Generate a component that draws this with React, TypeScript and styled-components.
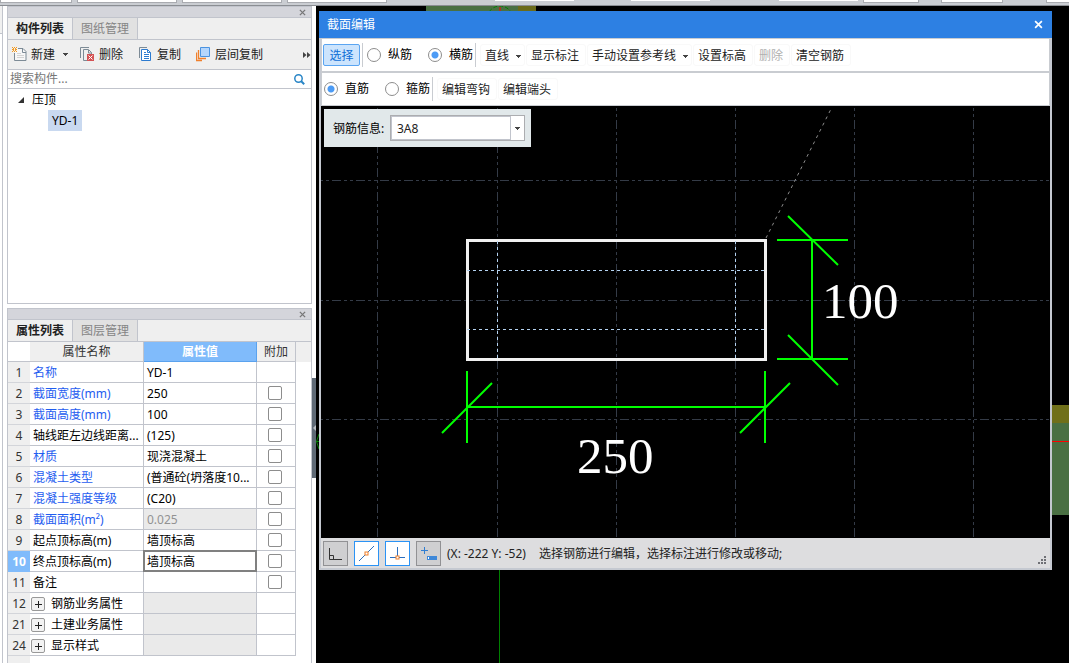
import React from 'react';
import styled, { createGlobalStyle, css } from 'styled-components';

const line = '#c1c4cc';
const fontStack = '"Noto Sans", "Noto Sans CJK SC", sans-serif';

const GlobalStyle = createGlobalStyle`
  *, *::before, *::after { box-sizing: border-box; }
  html, body { margin: 0; padding: 0; background: #fff; }
  body, button, input, select, textarea { font-family: ${fontStack}; font-size: 12px; line-height: 18px; }
  button { margin: 0; padding: 0; border: 0; background: none; color: inherit; }
  svg { display: block; flex: none; }
`;

/* ---------- page frame ---------- */

const Page = styled.div`
  display: flex;
  flex-direction: column;
  min-height: 100vh;
  overflow: hidden;
  color: #000;
`;

const TopStrip = styled.div`
  display: flex;
  align-items: flex-start;
  height: 6px;
  overflow: hidden;
  background: #cacdd2;
  border-bottom: 1px solid #8b8e93;
`;

const StripField = styled.div<{ $w: number; $gap: number; $outlined?: boolean }>`
  flex: none;
  width: ${p => p.$w}px;
  margin-left: ${p => p.$gap}px;
  height: ${p => (p.$outlined ? 3 : 1)}px;
  background: #fff;
  ${p => p.$outlined && css`border: 1px solid #a9abb0; border-top: 0;`}
`;

const Body = styled.div`
  display: flex;
  flex: 1;
`;

const LeftEdge = styled.div`
  flex: none;
  width: 3px;
  margin-right: 4px;
  border-right: 1px solid ${line};
`;

const LeftEdgeTab = styled.div`
  height: 28px;
  background: #f0f0f0;
  border-bottom: 1px solid ${line};
`;

const Sidebar = styled.div`
  flex: none;
  display: flex;
  flex-direction: column;
  gap: 4px;
  width: 305px;
`;

const Splitter = styled.div`
  flex: none;
  width: 4px;
  padding-top: 372px;
`;

const SplitterHandle = styled.button`
  display: flex;
  align-items: center;
  width: 4px;
  height: 100px;
  background: #5f6a76;
`;

/* ---------- docked panels ---------- */

const Panel = styled.section<{ $fill?: boolean }>`
  display: flex;
  flex-direction: column;
  border: 1px solid ${line};
  background: #fff;
  ${p => (p.$fill ? css`flex: 1; border-bottom: 0;` : css`height: 298px;`)}
`;

const PanelBar = styled.div`
  display: flex;
  justify-content: flex-end;
  align-items: center;
  height: 11px;
  padding-right: 5px;
  background: #d4d5db;
  border-bottom: 1px solid ${line};
`;

const Tabs = styled.div`
  display: flex;
  height: 22px;
  background: #efefef;
  border-bottom: 1px solid ${line};
`;

const Tab = styled.button<{ $active?: boolean }>`
  width: 65px;
  border-right: 1px solid ${line};
  background: ${p => (p.$active ? '#efefef' : '#e1e1e1')};
  color: ${p => (p.$active ? '#222' : '#858585')};
  font-weight: ${p => (p.$active ? 700 : 400)};
`;

const PanelTools = styled.div`
  display: flex;
  align-items: center;
  height: 30px;
  padding-left: 4px;
  background: #efefef;
  border-bottom: 1px solid ${line};
`;

const ToolButton = styled.button<{ $after: number }>`
  display: flex;
  align-items: center;
  gap: 4px;
  margin-right: ${p => p.$after}px;
  color: #222;
  white-space: nowrap;
`;

const CaretGap = styled.span`
  padding-left: 4px;
`;

const MoreButton = styled.button`
  margin-left: auto;
`;

const SearchRow = styled.div`
  display: flex;
  align-items: center;
  height: 19px;
  padding: 0 6px 0 2px;
  border-bottom: 1px solid ${line};
`;

const SearchInput = styled.input`
  flex: 1;
  min-width: 0;
  height: 18px;
  padding: 0;
  border: 0;
  outline: 0;
  background: none;
  &::placeholder { color: #777; opacity: 1; }
`;

const Tree = styled.ul`
  margin: 0;
  padding: 0 0 0 10px;
  list-style: none;
`;

const TreeNode = styled.div`
  display: flex;
  align-items: center;
  gap: 8px;
  height: 21px;
`;

const TreeChildren = styled.ul`
  margin: 0;
  padding: 0 0 0 30px;
  list-style: none;
`;

const TreeLeaf = styled.button`
  display: block;
  height: 21px;
  padding: 0 4px;
  background: #c9d9f0;
`;

/* ---------- property table ---------- */

const GridArea = styled.div`
  flex: 1;
  background: linear-gradient(to right, #efefef 22px, #fff 22px);
`;

const GridTop = styled.div`
  background: linear-gradient(#efefef 20px, transparent 20px);
`;

const PropTable = styled.table`
  table-layout: fixed;
  width: 288px;
  border-collapse: separate;
  border-spacing: 0;
`;

const HeadCell = styled.th<{ $active?: boolean; $corner?: boolean }>`
  height: 20px;
  padding: 1px 0 0;
  line-height: 18px;
  font-weight: ${p => (p.$active ? 700 : 400)};
  color: ${p => (p.$active ? '#fff' : '#333')};
  background: ${p => (p.$active ? '#80bbfb' : p.$corner ? '#fff' : '#efefef')};
  border-right: ${p => (p.$corner ? '0' : '1px')} solid ${p => (p.$active ? '#5aa2ee' : line)};
  border-bottom: 1px solid ${p => (p.$active ? '#5aa2ee' : line)};
`;

const RowNumber = styled.th<{ $active?: boolean }>`
  height: 21px;
  padding: 2px 0 0;
  line-height: 18px;
  text-align: center;
  font-weight: ${p => (p.$active ? 700 : 400)};
  color: ${p => (p.$active ? '#fff' : '#333')};
  background: ${p => (p.$active ? '#80bbfb' : '#efefef')};
  border-bottom: 1px solid ${p => (p.$active ? '#80bbfb' : '#d3d5da')};
`;

const Cell = styled.td<{ $tone?: 'link' | 'muted'; $shaded?: boolean; $focus?: boolean; $check?: boolean }>`
  position: relative;
  height: 21px;
  padding: ${p => (p.$check ? '0 2px 0 0' : '2px 3px 0')};
  line-height: 18px;
  overflow: ${p => (p.$focus ? 'visible' : 'hidden')};
  text-overflow: ellipsis;
  white-space: nowrap;
  color: ${p => (p.$tone === 'link' ? '#1f5df0' : p.$tone === 'muted' ? '#929292' : '#000')};
  background: ${p => (p.$shaded ? '#eaeaea' : '#fff')};
  border-right: 1px solid ${line};
  border-bottom: 1px solid ${line};
  ${p => p.$focus && css`
    &::after { content: ''; position: absolute; inset: -1px; border: 2px solid #808080; z-index: 1; }
  `}
`;

const GroupLabel = styled.div`
  display: flex;
  align-items: center;
  gap: 6px;
  margin-left: -2px;
`;

const ExpandButton = styled.button`
  display: grid;
  place-items: center;
  width: 14px;
  height: 14px;
  border: 1px solid #999;
  border-radius: 2px;
  background: #f3f3f3;
`;

const Check = styled.input`
  appearance: none;
  display: block;
  width: 14px;
  height: 14px;
  margin: 0 auto;
  border: 1px solid #8d8d8d;
  border-radius: 2px;
  background: #fff;
`;

/* ---------- workspace and editor window ---------- */

const Workspace = styled.main`
  position: relative;
  flex: 1;
  min-width: 0;
  min-height: 657px;
  background: #000;
`;

const Scene = styled.svg`
  position: absolute;
  inset: 0;
  width: 100%;
  height: 100%;
`;

const EditorWindow = styled.section`
  position: absolute;
  top: 5px;
  left: 3px;
  right: 17px;
  border: solid #c5c9d1;
  border-width: 0 2px 2px;
  background: #fff;
`;

const TitleBar = styled.header`
  display: flex;
  align-items: center;
  justify-content: space-between;
  height: 27px;
  margin: 0 -2px;
  padding: 0 9px 0 8px;
  background: #2d80e3;
  color: #fff;
`;

const ToolRow = styled.div<{ $last?: boolean }>`
  display: flex;
  align-items: center;
  height: ${p => (p.$last ? 33 : 35)}px;
  padding: 0 1px;
  border: solid #c9ccd1;
  border-width: ${p => (p.$last ? '0 1px 1px' : '1px 1px 2px')};
`;

const SelectButton = styled.button`
  width: 37px;
  height: 22px;
  padding-top: 1px;
  border: 1px solid #5aa5f2;
  border-radius: 2px;
  background: #cce4fd;
  color: #0f6fd6;
`;

const RadioLabel = styled.label<{ $before: number }>`
  display: flex;
  align-items: center;
  gap: 7px;
  margin-left: ${p => p.$before}px;
  white-space: nowrap;
`;

const Radio = styled.input`
  appearance: none;
  flex: none;
  width: 14px;
  height: 14px;
  margin: 0;
  border: 1px solid #8d8d8d;
  border-radius: 50%;
  background: #fff;
  &:checked { background: radial-gradient(circle, #4c9bf5 0 3px, #fff 4px); }
`;

const Divider = styled.span`
  width: 1px;
  height: 24px;
  margin: 0 3px 0 2px;
  background: #c9ccd1;
`;

const FlatButton = styled.button<{ $menu?: boolean }>`
  display: flex;
  align-items: center;
  gap: 7px;
  height: 22px;
  margin-left: 1px;
  padding: 2px ${p => (p.$menu ? 3 : 6)}px 0 4px;
  border: 1px solid #f9f9f9;
  border-radius: 3px;
  color: #222;
  white-space: nowrap;
  &:disabled { color: #b0b0b0; }
`;

const Stage = styled.div`
  position: relative;
  height: 432px;
  overflow: hidden;
  background: #000;
`;

const Drawing = styled.svg`
  width: 100%;
  height: 432px;
`;

const DimensionText = styled.text`
  font-family: "Liberation Serif", serif;
  font-size: 51px;
  fill: #fff;
`;

const InfoBox = styled.div`
  position: absolute;
  top: 3px;
  left: 3px;
  display: flex;
  align-items: center;
  justify-content: space-between;
  width: 207px;
  height: 38px;
  padding: 0 6px 0 9px;
  background: #e1e8ea;
`;

const InfoLabel = styled.label`
  padding-top: 2px;
`;

const Combo = styled.div`
  position: relative;
  width: 135px;
  height: 26px;
  border: 1px solid #acadb0;
  background: #fff;
`;

const ComboSelect = styled.select`
  appearance: none;
  width: 120px;
  height: 24px;
  padding: 2px 0 0 5px;
  border: 1px solid #c1c4cc;
  border-radius: 0;
  background: #fff;
  color: #222;
`;

const ComboCaret = styled.span`
  position: absolute;
  top: 11px;
  right: 4px;
  pointer-events: none;
`;

const StatusBar = styled.footer`
  display: flex;
  align-items: center;
  gap: 6px;
  height: 30px;
  padding: 0 3px 0 2px;
  background: #dddddf;
  color: #222;
`;

const SnapButton = styled.button<{ $on?: boolean }>`
  display: grid;
  place-items: center;
  width: 25px;
  height: 25px;
  border: 1px solid ${p => (p.$on ? '#2b93f5' : '#919194')};
  background: ${p => (p.$on ? '#fff' : '#cfcfd1')};
`;

const Coordinates = styled.output`
  min-width: 86px;
  padding-top: 1px;
  white-space: nowrap;
`;

const StatusText = styled.span`
  flex: 1;
  padding-top: 1px;
`;

const Grip = styled.svg`
  align-self: flex-end;
  margin-bottom: 3px;
`;

/* ---------- glyphs ---------- */

const Caret = () => (
  <svg width="5" height="3" shapeRendering="crispEdges"><path d="M0 0h5v1H4v1H3v1H2V2H1V1H0z" fill="#444" /></svg>
);

const CloseIcon = ({ size, color }: { size: number; color: string }) => (
  <svg width={size} height={size} viewBox="0 0 8 8">
    <path d="M1 1l6 6M7 1L1 7" stroke={color} strokeWidth="1.5" />
  </svg>
);

const NewIcon = () => (
  <svg width="15" height="15" viewBox="0 0 15 15" fill="none">
    <path d="M6 1.500h5l3 3v9H2.500V6" fill="#f7f7f7" stroke="#7d8b96" />
    <path d="M10.500 1.500v4H14" stroke="#7d8b96" />
    <path d="M5 6.500h4M5 8.500h7M5 10.500h7" stroke="#d3d3d3" />
    <path d="M0 0h1v1H0zM2 0h1v1H2zM4 0h1v1H4zM1 1h1v1H1zM3 1h1v1H3zM0 2h2v1H0zM3 2h2v1H3zM1 3h1v1H1zM3 3h1v1H3zM0 4h1v1H0zM2 4h1v1H2zM4 4h1v1H4z" fill="#f59a1f" />
  </svg>
);

const DeleteIcon = () => (
  <svg width="15" height="15" viewBox="0 0 15 15" fill="none">
    <path d="M.5 11V.5H9" stroke="#7d8b96" />
    <path d="M7 13.500H3.500v-11h5l3 3V7" stroke="#7d8b96" />
    <path d="M8.500 3v3h3" stroke="#7d8b96" />
    <path d="M7 7h7v7H7z" fill="#d45254" />
    <path d="M8.500 8.500l4 4M12.500 8.500l-4 4" stroke="#fff" />
  </svg>
);

const CopyIcon = () => (
  <svg width="14" height="15" viewBox="0 0 14 15" fill="none">
    <path d="M.5 11V.5H8" stroke="#7d8b96" />
    <path d="M2.500 2.500h6l3 3v8h-9z" fill="#fff" stroke="#2d7bd0" />
    <path d="M8.500 2.500v3h3" stroke="#2d7bd0" />
    <path d="M5 5.500h2M5 7.500h5M5 9.500h5M5 11.500h5" stroke="#2d7bd0" />
  </svg>
);

const LayerCopyIcon = () => (
  <svg width="15" height="15" viewBox="0 0 15 15" fill="none">
    <path d="M4.500 .5h9v9h-9z" fill="#b5d6fc" stroke="#4b93e0" />
    <path d="M2.500 3v8.500H10M.5 5.500v8H6" stroke="#f0802c" strokeWidth="1.300" />
  </svg>
);

const MoreIcon = () => (
  <svg width="8" height="6"><path d="M0 0l3.500 3L0 6zM4 0l3.500 3L4 6z" fill="#444" /></svg>
);

const SearchIcon = () => (
  <svg width="11" height="11" viewBox="0 0 11 11" fill="none" stroke="#2a86c7">
    <circle cx="4.500" cy="4.500" r="3.700" strokeWidth="1.500" />
    <path d="M7 7l3.200 3.200" strokeWidth="2" />
  </svg>
);

/* ---------- data ---------- */

type Prop = {
  no: number;
  name: string;
  value?: string;
  link?: boolean;
  group?: boolean;
  check?: boolean;
  muted?: boolean;
  focus?: boolean;
};

const properties: Prop[] = [
  { no: 1, name: '名称', value: 'YD-1', link: true },
  { no: 2, name: '截面宽度(mm)', value: '250', link: true, check: true },
  { no: 3, name: '截面高度(mm)', value: '100', link: true, check: true },
  { no: 4, name: '轴线距左边线距离...', value: '(125)', check: true },
  { no: 5, name: '材质', value: '现浇混凝土', link: true, check: true },
  { no: 6, name: '混凝土类型', value: '(普通砼(坍落度10...', link: true, check: true },
  { no: 7, name: '混凝土强度等级', value: '(C20)', link: true, check: true },
  { no: 8, name: '截面面积(m²)', value: '0.025', link: true, check: true, muted: true },
  { no: 9, name: '起点顶标高(m)', value: '墙顶标高', check: true },
  { no: 10, name: '终点顶标高(m)', value: '墙顶标高', check: true, focus: true },
  { no: 11, name: '备注', check: true },
  { no: 12, name: '钢筋业务属性', group: true },
  { no: 21, name: '土建业务属性', group: true },
  { no: 24, name: '显示样式', group: true },
];

const stripFields: [number, number, boolean][] = [
  [0, 72, true], [5, 100, true], [5, 100, true], [5, 100, true], [108, 79, false],
  [57, 79, false], [69, 79, false], [5, 56, true], [22, 62, true], [43, 60, true],
];

const gridColumns = [56.5, 176.5, 295.5, 414.5, 533.5, 652.5];
const gridRows = [74.5, 194.5, 313.5];

/* ---------- composed parts ---------- */

function ComponentPanel() {
  return (
    <Panel>
      <PanelBar><button aria-label="关闭"><CloseIcon size={7} color="#777" /></button></PanelBar>
      <Tabs>
        <Tab $active>构件列表</Tab>
        <Tab>图纸管理</Tab>
      </Tabs>
      <PanelTools>
        <ToolButton $after={12}><NewIcon />新建<CaretGap><Caret /></CaretGap></ToolButton>
        <ToolButton $after={16}><DeleteIcon />删除</ToolButton>
        <ToolButton $after={15}><CopyIcon />复制</ToolButton>
        <ToolButton $after={0}><LayerCopyIcon />层间复制</ToolButton>
        <MoreButton aria-label="更多"><MoreIcon /></MoreButton>
      </PanelTools>
      <SearchRow>
        <SearchInput type="text" placeholder="搜索构件..." aria-label="搜索构件" />
        <button aria-label="搜索"><SearchIcon /></button>
      </SearchRow>
      <Tree>
        <li>
          <TreeNode>
            <svg width="6" height="6"><path d="M6 0v6H0z" fill="#333" /></svg>
            压顶
          </TreeNode>
          <TreeChildren><li><TreeLeaf>YD-1</TreeLeaf></li></TreeChildren>
        </li>
      </Tree>
    </Panel>
  );
}

function PropertyPanel() {
  return (
    <Panel $fill>
      <PanelBar><button aria-label="关闭"><CloseIcon size={7} color="#777" /></button></PanelBar>
      <Tabs>
        <Tab $active>属性列表</Tab>
        <Tab>图层管理</Tab>
      </Tabs>
      <GridArea>
        <GridTop>
          <PropTable>
            <colgroup>
              <col style={{ width: 22 }} /><col style={{ width: 114 }} />
              <col style={{ width: 113 }} /><col style={{ width: 39 }} />
            </colgroup>
            <thead>
              <tr>
                <HeadCell $corner />
                <HeadCell scope="col">属性名称</HeadCell>
                <HeadCell scope="col" $active>属性值</HeadCell>
                <HeadCell scope="col">附加</HeadCell>
              </tr>
            </thead>
            <tbody>
              {properties.map(p => (
                <tr key={p.no}>
                  <RowNumber scope="row" $active={p.focus}>{p.no}</RowNumber>
                  <Cell $tone={p.link ? 'link' : undefined}>
                    {p.group ? (
                      <GroupLabel>
                        <ExpandButton aria-label={p.name}>
                          <svg width="7" height="7"><path d="M3 0h1v3h3v1H4v3H3V4H0V3h3z" fill="#222" /></svg>
                        </ExpandButton>
                        {p.name}
                      </GroupLabel>
                    ) : p.name}
                  </Cell>
                  <Cell $tone={p.muted ? 'muted' : undefined} $shaded={p.muted || p.group} $focus={p.focus}>
                    {p.value}
                  </Cell>
                  <Cell $check>{p.check && <Check type="checkbox" aria-label={p.name} />}</Cell>
                </tr>
              ))}
            </tbody>
          </PropTable>
        </GridTop>
      </GridArea>
    </Panel>
  );
}

function SectionDrawing() {
  return (
    <Drawing fill="none">
      <g stroke="#343b47" strokeDasharray="9 3 3 3 3 3">
        {gridColumns.map(x => <path key={x} d={`M${x} -10V432`} />)}
        {gridRows.map(y => <line key={y} x1="-13" x2="100%" y1={y} y2={y} />)}
      </g>
      <path d="M445 132L511 1" stroke="#8c8c8c" strokeDasharray="3 4" />
      <rect x="146.5" y="134.5" width="298" height="119" stroke="#f0f0f0" strokeWidth="3" />
      <path d="M146 164.500H445M146 223.500H445M176.500 135V254M414.500 135V254" stroke="#b4d2f0" strokeDasharray="3 3" />
      <g stroke="#00ff00" strokeWidth="2">
        <path d="M456 134H527M456 253H527M491 134V253M467 110L517 159M467 229L517 279" />
        <path d="M146 301H444M146 265V337M444 265V337M121 327L171 277M419 327L469 277" />
      </g>
      <DimensionText x="501" y="212">100</DimensionText>
      <DimensionText x="256" y="367">250</DimensionText>
    </Drawing>
  );
}

function SectionEditor() {
  return (
    <EditorWindow aria-label="截面编辑">
      <TitleBar>
        <span>截面编辑</span>
        <button aria-label="关闭"><CloseIcon size={9} color="#fff" /></button>
      </TitleBar>
      <ToolRow>
        <SelectButton>选择</SelectButton>
        <Divider />
        <RadioLabel $before={1}><Radio type="radio" name="bar" />纵筋</RadioLabel>
        <RadioLabel $before={16}><Radio type="radio" name="bar" defaultChecked />横筋</RadioLabel>
        <Divider />
        <FlatButton $menu>直线<Caret /></FlatButton>
        <FlatButton>显示标注</FlatButton>
        <FlatButton $menu>手动设置参考线<Caret /></FlatButton>
        <FlatButton>设置标高</FlatButton>
        <FlatButton disabled>删除</FlatButton>
        <FlatButton>清空钢筋</FlatButton>
      </ToolRow>
      <ToolRow $last>
        <RadioLabel $before={1}><Radio type="radio" name="shape" defaultChecked />直筋</RadioLabel>
        <RadioLabel $before={16}><Radio type="radio" name="shape" />箍筋</RadioLabel>
        <Divider />
        <FlatButton>编辑弯钩</FlatButton>
        <FlatButton>编辑端头</FlatButton>
      </ToolRow>
      <Stage>
        <SectionDrawing />
        <InfoBox>
          <InfoLabel htmlFor="rebar">钢筋信息:</InfoLabel>
          <Combo>
            <ComboSelect id="rebar" defaultValue="3A8"><option>3A8</option></ComboSelect>
            <ComboCaret><Caret /></ComboCaret>
          </Combo>
        </InfoBox>
      </Stage>
      <StatusBar>
        <SnapButton aria-label="正交">
          <svg width="15" height="15" fill="none" stroke="#333"><path d="M1.500 2v11.500H14M1.500 9.500h4v4" /></svg>
        </SnapButton>
        <SnapButton $on aria-label="中点">
          <svg width="17" height="17" fill="none">
            <path d="M1 16L16 1" stroke="#2b6fc0" />
            <rect x="7" y="7" width="3" height="3" fill="#fff" stroke="#f0802c" />
          </svg>
        </SnapButton>
        <SnapButton $on aria-label="垂足">
          <svg width="17" height="17" fill="none">
            <path d="M8.500 2v11M1 12.500h15" stroke="#2b6fc0" />
            <rect x="7" y="11" width="3" height="3" fill="#fff" stroke="#f0802c" />
          </svg>
        </SnapButton>
        <SnapButton aria-label="动态输入">
          <svg width="17" height="17" fill="none">
            <path d="M4.500 2v7M1 5.500h7" stroke="#2f7dd2" />
            <path d="M7 11h10v4H7z" fill="#3f88d8" />
            <path d="M8.500 12v2" stroke="#fff" />
          </svg>
        </SnapButton>
        <Coordinates>(X: -222 Y: -52)</Coordinates>
        <StatusText>选择钢筋进行编辑，选择标注进行修改或移动;</StatusText>
        <Grip width="9" height="9" shapeRendering="crispEdges">
          <path d="M6 0h2v2H6zM3 3h2v2H3zM6 3h2v2H6zM0 6h2v2H0zM3 6h2v2H3zM6 6h2v2H6z" fill="#6f7075" />
        </Grip>
      </StatusBar>
    </EditorWindow>
  );
}

export default function App() {
  return (
    <Page>
      <GlobalStyle />
      <TopStrip>
        {stripFields.map(([gap, w, outlined], i) => (
          <StripField key={i} $gap={gap} $w={w} $outlined={outlined} />
        ))}
      </TopStrip>
      <Body>
        <LeftEdge><LeftEdgeTab /></LeftEdge>
        <Sidebar>
          <ComponentPanel />
          <PropertyPanel />
        </Sidebar>
        <Splitter>
          <SplitterHandle aria-label="折叠">
            <svg width="4" height="6"><path d="M4 0v6L1 3z" fill="#b9bec4" /></svg>
          </SplitterHandle>
        </Splitter>
        <Workspace>
          <Scene fill="none">
            <path d="M110 0h92v9h-92z" fill="#4a7043" />
            <path d="M202 0h18v9h-18z" fill="#6b6b1a" />
            <circle cx="184" cy="13" r="13" stroke="#008000" strokeDasharray="4 2" />
            <path d="M184 1V8" stroke="#ff0000" />
            <path d="M736 399h17v18h-17z" fill="#70701a" />
            <path d="M736 417h17v92h-17z" fill="#4a7043" />
            <path d="M736 435.500h17" stroke="#ff0000" />
            <path d="M183.500 564V657" stroke="#008000" />
            <path d="M3 428L.5 435.500L3 443M0 435.500h3" stroke="#008000" />
          </Scene>
          <SectionEditor />
        </Workspace>
      </Body>
    </Page>
  );
}
